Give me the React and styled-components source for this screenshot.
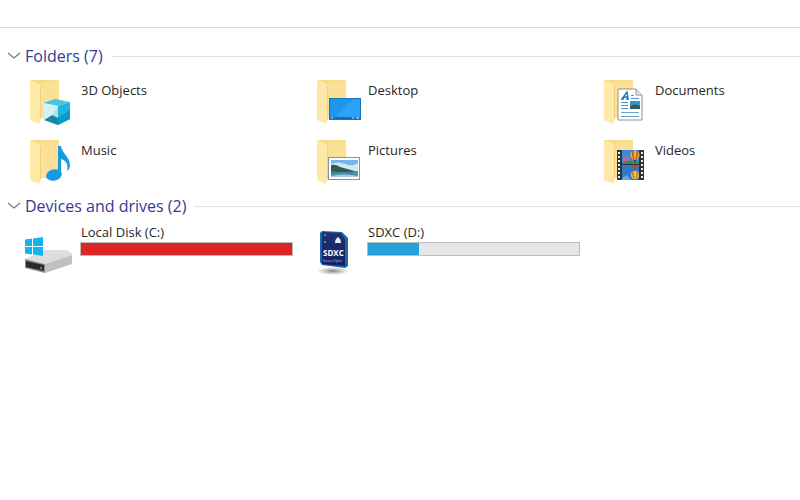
import * as React from "react";
import styled, { createGlobalStyle } from "styled-components";

const GlobalStyle = createGlobalStyle`
  body {
    margin: 0;
    background: #fff;
    color: #262626;
    font-family: "Open Sans", "Noto Sans", sans-serif;
    font-size: 13px;
  }
`;

const Explorer = styled.main`
  overflow-x: hidden;
  padding-bottom: 24px;
`;

const Toolbar = styled.div`
  height: 27px;
  border-bottom: 1px solid #d9d9d9;
`;

const Section = styled.section`
  padding-top: ${({ $first }) => ($first ? "16px" : "4px")};
`;

const SectionHeader = styled.h2`
  display: flex;
  align-items: center;
  gap: 8px;
  margin: 0;

  &::after {
    content: "";
    flex: 1;
    border-top: 1px solid #e2e2e2;
  }
`;

const Toggle = styled.button`
  display: flex;
  align-items: center;
  gap: 4px;
  padding: 0 0 0 7px;
  border: 0;
  background: none;
  color: #343a96;
  font: 16px/24px "Open Sans", "Noto Sans", sans-serif;
`;

const Chevron = styled.svg`
  width: 14px;
  height: 14px;
  transform: ${({ $open }) => ($open ? "none" : "rotate(-90deg)")};
`;

const Tiles = styled.div`
  display: grid;
  grid-template-columns: repeat(3, minmax(269px, 1fr));
  gap: 12px 18px;
  padding: ${({ $drives }) => ($drives ? "10px 0 0 24px" : "10px 0 4px 24px")};
`;

const Tile = styled.a`
  display: flex;
  gap: 8px;
  color: inherit;
  text-decoration: none;
`;

const Icon = styled.svg`
  flex: none;
  width: 48px;
  height: 48px;
  overflow: visible;
`;

const Details = styled.div`
  flex: 1;
  padding-top: ${({ $drive }) => ($drive ? "0" : "4px")};
`;

const Name = styled.div`
  padding-left: 1px;
  line-height: 16px;
`;

const DriveName = styled(Name)`
  margin-top: -4px;
`;

const Usage = styled.div`
  box-sizing: border-box;
  height: 14px;
  margin-top: 2px;
  border: 1px solid #bcbcbc;
  background: #e6e6e6;
`;

const UsageFill = styled.div`
  height: 100%;
  background: ${({ $full }) => ($full ? "#da2626" : "#26a0da")};
`;

const Folder = () => (
  <>
    <path d="M6 2H35V40H14L6 38Z" fill="#f8dc85" />
    <path d="M16 6L35 2V40H16Z" fill="#fae197" />
    <path d="M6 2L15 6Q17 7 17 9V41L15 46L6 42Z" fill="#ffe9a8" />
    <path d="M16.5 8V41" stroke="#efd27a" strokeWidth="1" />
  </>
);

const ObjectsIcon = () => (
  <Icon viewBox="0 0 48 48" aria-hidden="true">
    <Folder />
    <path d="M19 25L31 21L46 24L34 28Z" fill="#48c4dc" />
    <path d="M19 25L34 28V47L20 42Z" fill="#a9e4f0" />
    <path d="M34 28L46 24V41L34 47Z" fill="#1fb4e2" />
    <path d="M20 42L28 37L34 40V47Z" fill="#16899f" />
    <path d="M34 40L46 32V41L34 47Z" fill="#079ac9" />
    <path d="M19 25L34 28L28 37L20 42Z" fill="#d4f1f6" />
  </Icon>
);

const DesktopIcon = () => (
  <Icon viewBox="0 0 48 48" aria-hidden="true">
    <Folder />
    <rect x="18" y="20" width="32" height="22" fill="#1473bd" />
    <rect x="19" y="21" width="30" height="18" fill="#1f96ee" />
    <path d="M24 39L42 21H49V39Z" fill="#2ba2f4" />
    <rect x="19" y="39" width="30" height="2" fill="#116fb8" />
    <path d="M20 40H22M41 40H43M45 40H48" stroke="#d8efff" />
  </Icon>
);

const DocumentsIcon = () => (
  <Icon viewBox="0 0 48 48" aria-hidden="true">
    <Folder />
    <path d="M20 11H38L44 17V42H20Z" fill="#fff" stroke="#8d9397" />
    <path d="M38 11V17H44" fill="#e5e9eb" stroke="#8d9397" />
    <path d="M24 21L29 14L30 21M26 19H30M23 21H26M28 21H31" fill="none" stroke="#1b78bd" strokeWidth="1.4" />
    <path d="M33 17.5H36M33 20.5H41M23 24.5H30M23 27.5H30M23 30.5H30" stroke="#4d92c6" />
    <path d="M23 34.5H41M23 38.5H41" stroke="#6da3ca" />
    <rect x="32" y="23" width="10" height="8" fill="#3c91cf" />
    <path d="M32 28Q37 25 42 28V31H32Z" fill="#315f55" />
  </Icon>
);

const MusicIcon = () => (
  <Icon viewBox="0 0 48 48" aria-hidden="true">
    <Folder />
    <ellipse cx="30" cy="37" rx="8" ry="5.5" transform="rotate(-12 30 37)" fill="#169be2" />
    <path d="M34 8H37C38 16 46 18 46 28Q46 31 43 33C45 25 41 22 37 21V37H34Z" fill="#169be2" />
  </Icon>
);

const PicturesIcon = () => (
  <Icon viewBox="0 0 48 48" aria-hidden="true">
    <Folder />
    <rect x="17.5" y="19.5" width="31" height="22" fill="#fff" stroke="#7f95a5" />
    <rect x="20" y="22" width="27" height="17" fill="#75b7e9" />
    <path d="M20 26Q27 23 34 26T47 25V33H20Z" fill="#cfe7f4" />
    <path d="M20 27Q25 26 29 29L40 32L47 34H20Z" fill="#345c4c" />
    <path d="M20 33H47V39H20Z" fill="#4b8fab" />
    <path d="M20 34Q30 33 42 34" fill="none" stroke="#31535d" />
    <path d="M20 38Q33 35 47 38V39H20Z" fill="#a6cdd8" />
  </Icon>
);

const VideosIcon = () => (
  <Icon viewBox="0 0 48 48" aria-hidden="true">
    <Folder />
    <rect x="19" y="12" width="27" height="30" fill="#303438" />
    <path d="M21 14V42M44 14V42" stroke="#eff1ef" strokeWidth="2" strokeDasharray="2 2" />
    <rect x="24" y="12" width="17" height="14" fill="#4388d3" />
    <rect x="24" y="27" width="17" height="15" fill="#3478c8" />
    <circle cx="28" cy="22" r="3" fill="#cd5aab" />
    <circle cx="37" cy="17" r="4.5" fill="#efb82c" />
    <path d="M35 13Q34 17 36 21M39 13Q40 17 38 21" fill="none" stroke="#cd3b28" strokeWidth="1.4" />
    <path d="M36 22H38V24H36Z" fill="#513b27" />
    <path d="M24 25Q30 21 35 24L41 23V26H24Z" fill="#3b8a4c" />
    <path d="M34 27H40L38 31H36Z" fill="#c64035" />
    <circle cx="37" cy="37" r="4" fill="#f0c536" />
    <path d="M35 34Q34 37 36 40M39 34Q40 37 38 40" fill="none" stroke="#d3442c" />
    <path d="M24 40L29 37L33 42H24Z" fill="#69a7dc" />
  </Icon>
);

const LocalDiskIcon = () => (
  <Icon viewBox="0 0 48 48" aria-hidden="true">
    <path d="M1 31L21 22H42Q48 24 48 27L21 36Z" fill="#dedede" />
    <path d="M21 36L48 27V36L21 45Z" fill="#c0c0c0" />
    <path d="M1 31L21 36V45L1 40Z" fill="#8c8c8c" />
    <path d="M2 33L20 37V43L2 39Z" fill="#292b2a" />
    <path d="M16 39L18 39.5V41L16 40.5Z" fill="#43c557" />
    <path d="M1 11.5L8 10.5V18H1ZM9 10.4L19 9V18H9ZM1 19H8V26.5L1 25.5ZM9 19H19V28L9 26.6Z" fill="#12b4ef" />
  </Icon>
);

const SdCardIcon = () => (
  <Icon viewBox="0 0 48 48" aria-hidden="true">
    <defs>
      <radialGradient id="card-shadow">
        <stop offset="0" stopColor="#666" stopOpacity="0.8" />
        <stop offset="1" stopColor="#777" stopOpacity="0" />
      </radialGradient>
      <linearGradient id="card-face" x2="0" y2="1">
        <stop offset="0" stopColor="#1d3274" />
        <stop offset="1" stopColor="#141f60" />
      </linearGradient>
    </defs>
    <ellipse cx="22" cy="43" rx="16" ry="4" fill="url(#card-shadow)" />
    <path d="M11 3L31 4L37 10V38L34 40L11 37L9 34V5Z" fill="#1668ac" />
    <path d="M12 4L30 5L34 11V38L11 36V5Z" fill="url(#card-face)" />
    <path d="M24 15Q24 11 27 9Q30 11 30 15Z" fill="#e8eef8" />
    <path d="M14 6V8M14 13V15" stroke="#a9bedf" />
    <text x="12" y="28" fill="#fff" fontFamily="Open Sans, sans-serif" fontSize="8" fontWeight="700">SDXC</text>
    <text x="12" y="34" fill="#b8c6e5" fontFamily="Open Sans, sans-serif" fontSize="3">Secure Digital</text>
  </Icon>
);

const folders = [
  { name: "3D Objects", icon: ObjectsIcon },
  { name: "Desktop", icon: DesktopIcon },
  { name: "Documents", icon: DocumentsIcon },
  { name: "Music", icon: MusicIcon },
  { name: "Pictures", icon: PicturesIcon },
  { name: "Videos", icon: VideosIcon },
];

const drives = [
  { name: "Local Disk (C:)", icon: LocalDiskIcon, used: 100 },
  { name: "SDXC (D:)", icon: SdCardIcon, used: 24 },
];

const Group = ({ title, first, children }) => {
  const [open, setOpen] = React.useState(true);
  return (
    <Section $first={first}>
      <SectionHeader>
        <Toggle type="button" aria-expanded={open} onClick={() => setOpen(!open)}>
          <Chevron $open={open} viewBox="0 0 14 14" aria-hidden="true">
            <path d="M1 4L7 9L13 4" fill="none" stroke="#777" strokeWidth="1.2" />
          </Chevron>
          <span>{title}</span>
        </Toggle>
      </SectionHeader>
      {open && children}
    </Section>
  );
};

const App = () => (
  <>
    <GlobalStyle />
    <Explorer>
      <Toolbar />
      <Group title="Folders (7)" first>
        <Tiles>
          {folders.map(({ name, icon: Picture }) => (
            <Tile key={name} href="#">
              <Picture />
              <Details>
                <Name>{name}</Name>
              </Details>
            </Tile>
          ))}
        </Tiles>
      </Group>
      <Group title="Devices and drives (2)">
        <Tiles $drives>
          {drives.map(({ name, icon: Picture, used }) => (
            <Tile key={name} href="#">
              <Picture />
              <Details $drive>
                <DriveName>{name}</DriveName>
                <Usage role="meter" aria-label={`${name} space used`} aria-valuemin={0} aria-valuemax={100} aria-valuenow={used}>
                  <UsageFill $full={used > 90} style={{ width: `${used}%` }} />
                </Usage>
              </Details>
            </Tile>
          ))}
        </Tiles>
      </Group>
    </Explorer>
  </>
);

export default App;
